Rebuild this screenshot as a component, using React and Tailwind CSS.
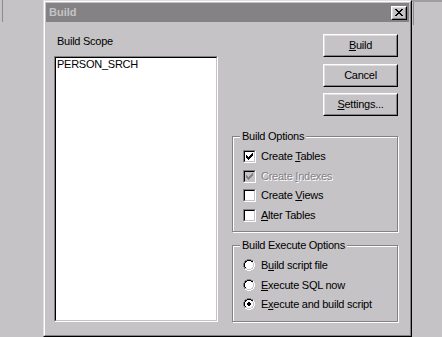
const CHECK = ['......X', '.....XX', 'X...XXX', 'XX.XXX.', 'XXXXX..', '.XXX...', '..X....'];

const RADIO = [
  '....GGGG....',
  '..GGKKKKGG..',
  '.GKKwwwwKKW.',
  '.GKwwwwwwLW.',
  'GKwwwwwwwwLW',
  'GKwwwwwwwwLW',
  'GKwwwwwwwwLW',
  'GKwwwwwwwwLW',
  '.GKwwwwwwLW.',
  '.GLLwwwwLLW.',
  '..WWLLLLWW..',
  '....WWWW....',
];

const RADIO_ON = [
  '....GGGG....',
  '..GGKKKKGG..',
  '.GKKwwwwKKW.',
  '.GKwwwwwwLW.',
  'GKwwwDDwwwLW',
  'GKwwDDDDwwLW',
  'GKwwDDDDwwLW',
  'GKwwwDDwwwLW',
  '.GKwwwwwwLW.',
  '.GLLwwwwLLW.',
  '..WWLLLLWW..',
  '....WWWW....',
];

const CLOSE = ['XX....XX', '.XX..XX.', '..XXXX..', '...XX...', '..XXXX..', '.XX..XX.', 'XX....XX'];

const RADIO_COLORS = { G: '#848284', K: '#000000', w: '#ffffff', W: '#ffffff', L: '#c6c3c6', D: '#000000' };

function Pixels({ rows, palette }) {
  const h = rows.length;
  const w = rows[0].length;
  return (
    <svg width={w} height={h} viewBox={`0 0 ${w} ${h}`} shapeRendering="crispEdges" className="block">
      {rows.flatMap((row, y) =>
        row.split('').map((c, x) =>
          palette[c] ? <rect key={`${x}-${y}`} x={x} y={y} width="1" height="1" fill={palette[c]} /> : null
        )
      )}
    </svg>
  );
}

const U = ({ children }) => <span className="underline underline-offset-[1px] decoration-1">{children}</span>;

function Button({ children }) {
  return (
    <div className="w-[75px] h-[23px] border border-t-white border-l-white border-b-black border-r-black">
      <div className="h-full border border-t-[#dfdfdf] border-l-[#dfdfdf] border-b-[#848284] border-r-[#848284] flex items-center justify-center">
        {children}
      </div>
    </div>
  );
}

function Checkbox({ checked, disabled, className = '', children }) {
  return (
    <div className={`flex items-center h-[13px] ${className}`}>
      <div className="w-[13px] h-[13px] border border-t-[#848284] border-l-[#848284] border-b-white border-r-white">
        <div
          className={`w-full h-full border border-t-black border-l-black border-b-[#c6c3c6] border-r-[#c6c3c6] p-[1px] ${
            disabled ? 'bg-[#c6c3c6]' : 'bg-white'
          }`}
        >
          {checked && <Pixels rows={CHECK} palette={{ X: disabled ? '#848284' : '#000000' }} />}
        </div>
      </div>
      <span className={`ml-[5px] ${disabled ? 'text-[#848284] [text-shadow:1px_1px_0_#ffffff]' : ''}`}>{children}</span>
    </div>
  );
}

function Radio({ checked, className = '', children }) {
  return (
    <div className={`flex items-center h-[12px] ${className}`}>
      <Pixels rows={checked ? RADIO_ON : RADIO} palette={RADIO_COLORS} />
      <span className="ml-[6px]">{children}</span>
    </div>
  );
}

function Group({ title, className = '', children }) {
  return (
    <div className={`relative border border-[#848284] shadow-[inset_1px_1px_0_#ffffff,1px_1px_0_#ffffff] ${className}`}>
      <span className="absolute left-[7px] -top-[7px] px-[2px] bg-[#c6c3c6] leading-[13px]">{title}</span>
      {children}
    </div>
  );
}

export default function App() {
  return (
    <div className="w-[442px] h-[337px] overflow-hidden flex bg-[#c6c3c6] text-black text-[11px] leading-[13px] font-['Liberation_Sans',Arial,sans-serif]">
      {/* background window bits, left */}
      <div className="w-[43px] shrink-0">
        <div className="ml-[2px] w-[1px] h-[22px] bg-[#8c8a8d]" />
      </div>

      {/* dialog */}
      <div className="w-[369px] h-[337px] shrink-0 border border-t-[#dfdfdf] border-l-[#dfdfdf] border-b-black border-r-black">
        <div className="h-full border border-t-white border-l-white border-b-[#848284] border-r-[#848284] p-[1px] flex flex-col">
          {/* title bar */}
          <div className="h-[19px] shrink-0 bg-[#848284] flex items-center justify-between pl-[3px] pr-[2px]">
            <span className="font-bold text-[#c6c3c6]">Build</span>
            <div className="w-[16px] h-[14px] border border-t-white border-l-white border-b-black border-r-black">
              <div className="h-full border border-t-[#dfdfdf] border-l-[#dfdfdf] border-b-[#848284] border-r-[#848284] bg-[#c6c3c6] flex items-center justify-center">
                <Pixels rows={CLOSE} palette={{ X: '#000000' }} />
              </div>
            </div>
          </div>

          {/* body */}
          <div className="flex pl-[8px] tracking-[-0.25px]">
            {/* scope list */}
            <div className="w-[164px] shrink-0 pt-[13px]">
              <div className="pl-[3px] h-[13px]">Build Scope</div>
              <div className="mt-[8px] h-[266px] border border-t-[#848284] border-l-[#848284] border-b-white border-r-white">
                <div className="h-full bg-white border border-t-black border-l-black border-b-[#c6c3c6] border-r-[#c6c3c6] pl-[1px]">
                  PERSON_SRCH
                </div>
              </div>
            </div>

            {/* buttons and options */}
            <div className="w-[167px] shrink-0 ml-[14px] pt-[12px]">
              <div className="ml-[91px]">
                <Button>
                  <U>B</U>uild
                </Button>
                <div className="mt-[7px]">
                  <Button>Cancel</Button>
                </div>
                <div className="mt-[6px]">
                  <Button>
                    <U>S</U>ettings...
                  </Button>
                </div>
              </div>

              <Group title="Build Options" className="mt-[20px] w-[166px] h-[96px] pt-[13px] pl-[10px]">
                <Checkbox checked>
                  Create <U>T</U>ables
                </Checkbox>
                <Checkbox checked disabled className="mt-[7px]">
                  Create <U>I</U>ndexes
                </Checkbox>
                <Checkbox className="mt-[6px]">
                  Create <U>V</U>iews
                </Checkbox>
                <Checkbox className="mt-[7px]">
                  <U>A</U>lter Tables
                </Checkbox>
              </Group>

              <Group title="Build Execute Options" className="mt-[13px] w-[166px] h-[77px] pt-[13px] pl-[10px]">
                <Radio>
                  B<U>u</U>ild script file
                </Radio>
                <Radio className="mt-[8px]">
                  <U>E</U>xecute SQL now
                </Radio>
                <Radio checked className="mt-[7px]">
                  E<U>x</U>ecute and build script
                </Radio>
              </Group>
            </div>
          </div>
        </div>
      </div>

      {/* background window bits, right */}
      <div className="flex-1">
        <div className="h-[2px] bg-[#a09ea1]" />
        <div className="ml-[1px] w-[1px] h-[23px] bg-[#8c8a8d]" />
      </div>
    </div>
  );
}
